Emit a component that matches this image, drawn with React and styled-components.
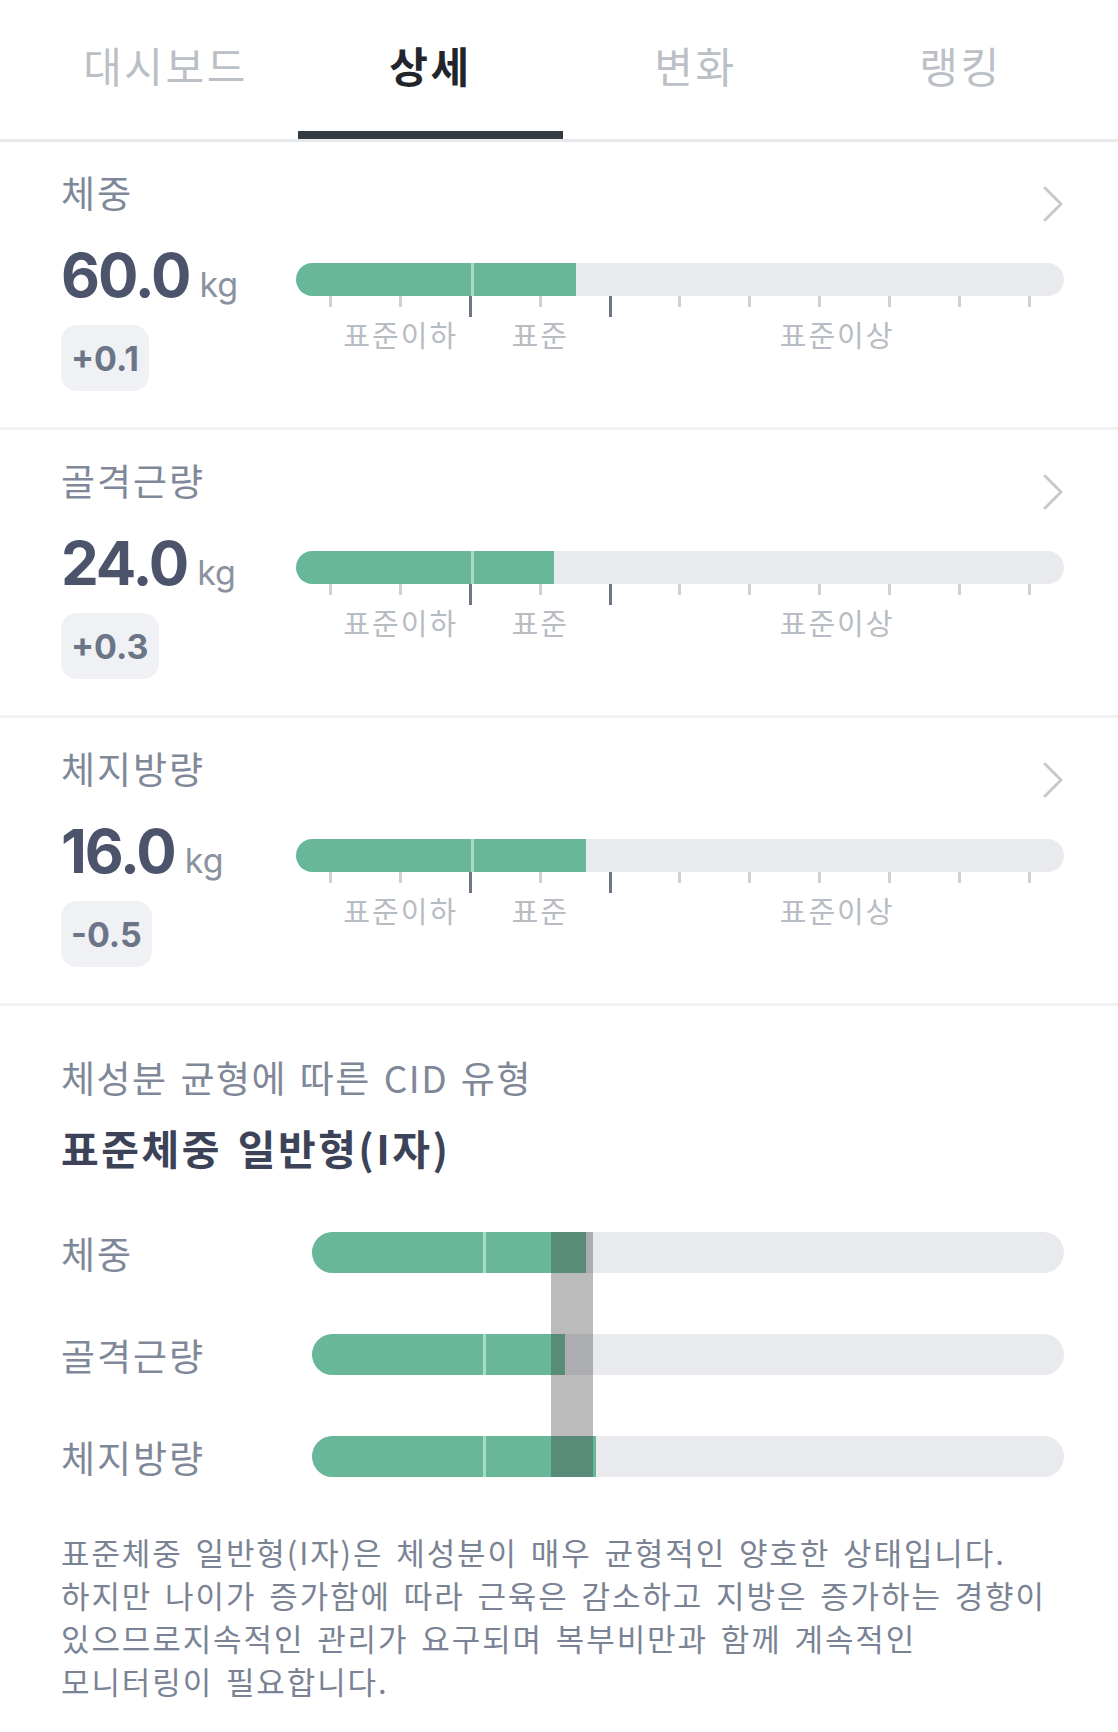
import React from "react";
import styled, { createGlobalStyle } from "styled-components";

const GlobalStyle = createGlobalStyle`
  html, body {
    margin: 0;
    padding: 0;
    background: #ffffff;
  }
  body {
    font-family: "Noto Sans CJK KR", "Noto Sans", sans-serif;
    -webkit-font-smoothing: antialiased;
  }
  * {
    box-sizing: border-box;
  }
`;

const GREEN = "#68b799";
const TRACK = "#e9eaee";
const MARK = (2.5 / 11) * 100;

const Page = styled.div`
  width: 1118px;
  min-height: 1732px;
  background: #ffffff;
`;

const TabBar = styled.nav`
  display: flex;
  height: 142px;
  padding-left: 33px;
  border-bottom: 3px solid #e8e9ec;
`;

const Tab = styled.div`
  width: 265px;
  display: flex;
  align-items: center;
  justify-content: center;
  padding-bottom: 2px;
  font-size: 42px;
  letter-spacing: 2.5px;
  font-weight: ${(p) => (p.$active ? 700 : 400)};
  color: ${(p) => (p.$active ? "#22262c" : "#bbbfc6")};
  border-bottom: 8px solid ${(p) => (p.$active ? "#343c43" : "transparent")};
`;

const Metric = styled.section`
  height: 288px;
  padding: 28px 54px 0 61px;
  border-bottom: 3px solid #f1f2f4;
`;

const MetricHeader = styled.div`
  display: flex;
  justify-content: space-between;
  align-items: flex-start;
  height: 51px;
`;

const Label = styled.div`
  font-size: 37px;
  line-height: 44px;
  letter-spacing: 2px;
  color: #7f8898;
`;

const ChevronIcon = styled.svg`
  margin-top: 15px;
  display: block;
`;

const MetricBody = styled.div`
  display: flex;
  margin-top: 24px;
`;

const LeftCol = styled.div`
  width: 235px;
  flex: none;
  display: flex;
  flex-direction: column;
  align-items: flex-start;
`;

const Value = styled.div`
  display: flex;
  align-items: baseline;
  font-family: Inter, "Noto Sans", sans-serif;
  font-size: 60px;
  font-weight: 700;
  line-height: 60px;
  letter-spacing: -2px;
  color: #4b546a;
`;

const Unit = styled.span`
  margin-left: 10px;
  font-size: 34px;
  font-weight: 400;
  letter-spacing: 0;
  color: #8a92a0;
`;

const Badge = styled.div`
  margin-top: 10px;
  height: 66px;
  padding: 0 10px;
  display: flex;
  align-items: center;
  border-radius: 16px;
  background: #f0f1f5;
  font-family: Inter, "Noto Sans", sans-serif;
  font-size: 34px;
  font-weight: 700;
  color: #6c7588;
`;

const RightCol = styled.div`
  flex: 1;
  padding-top: 18px;
`;

const Track = styled.div`
  display: flex;
  height: ${(p) => p.$h}px;
  border-radius: ${(p) => p.$h / 2}px;
  background: ${TRACK};
  overflow: hidden;
`;

const Fill = styled.div`
  flex: none;
  height: 100%;
  background: ${GREEN};
`;

const FillMark = styled.div`
  flex: none;
  width: 3px;
  height: 100%;
  background: #a8dbc5;
`;

const TickRow = styled.div`
  display: flex;
  height: 21px;
`;

const TickCell = styled.div`
  flex: 1;
  display: flex;
  justify-content: center;
`;

const Tick = styled.div`
  width: 3px;
  height: ${(p) => (p.$major ? 21 : 11)}px;
  background: ${(p) => (p.$major ? "#6e7686" : "#cfd1d5")};
`;

const ScaleLabels = styled.div`
  display: grid;
  grid-template-columns: repeat(22, 1fr);
  margin-top: 0;
`;

const ScaleLabel = styled.div`
  grid-row: 1;
  grid-column: ${(p) => p.$span};
  text-align: center;
  white-space: nowrap;
  font-size: 29px;
  letter-spacing: 2px;
  line-height: 34px;
  color: #b8bcc3;
`;

const CidSection = styled.section`
  padding: 49px 54px 30px 61px;
`;

const CidCaption = styled.div`
  font-size: 37px;
  line-height: 44px;
  letter-spacing: 1.5px;
  word-spacing: 3px;
  color: #7f8898;
`;

const CidTitle = styled.div`
  margin-top: 23px;
  font-size: 41px;
  font-weight: 700;
  line-height: 50px;
  letter-spacing: 2.5px;
  word-spacing: 4px;
  color: #3c4358;
`;

const Chart = styled.div`
  display: grid;
  grid-template-columns: 251px 1fr;
  grid-auto-rows: 41px;
  row-gap: 61px;
  margin-top: 60px;
  align-items: center;
`;

const RowLabel = styled.div`
  grid-column: 1;
  font-size: 37px;
  line-height: 44px;
  letter-spacing: 2px;
  color: #7f8898;
`;

const RowTrack = styled.div`
  grid-column: 2;
`;

const Band = styled.div`
  grid-column: 2;
  grid-row: 1 / 4;
  align-self: stretch;
  position: relative;
  z-index: 1;
  margin-left: 31.8%;
  width: 5.6%;
  background: rgba(60, 60, 64, 0.35);
`;

const Description = styled.p`
  margin: 53px 0 0;
  font-size: 31px;
  line-height: 43px;
  letter-spacing: 1.9px;
  word-spacing: 4px;
  color: #7a8394;
`;

const Chevron = () => (
  <ChevronIcon width="22" height="38" viewBox="0 0 22 38">
    <polyline
      points="3,3 19,19 3,35"
      fill="none"
      stroke="#c9c9cd"
      strokeWidth="3"
      strokeLinecap="round"
      strokeLinejoin="round"
    />
  </ChevronIcon>
);

const Bar = ({ fill, height }) => (
  <Track $h={height}>
    <Fill style={{ width: `${MARK}%` }} />
    <FillMark />
    <Fill style={{ width: `calc(${fill - MARK}% - 3px)` }} />
  </Track>
);

const tabs = ["대시보드", "상세", "변화", "랭킹"];

const metrics = [
  { label: "체중", value: "60.0", delta: "+0.1", fill: 36.5 },
  { label: "골격근량", value: "24.0", delta: "+0.3", fill: 33.6 },
  { label: "체지방량", value: "16.0", delta: "-0.5", fill: 37.7 },
];

const MetricRow = ({ item }) => (
  <Metric>
    <MetricHeader>
      <Label>{item.label}</Label>
      <Chevron />
    </MetricHeader>
    <MetricBody>
      <LeftCol>
        <Value>
          {item.value}
          <Unit>kg</Unit>
        </Value>
        <Badge>{item.delta}</Badge>
      </LeftCol>
      <RightCol>
        <Bar fill={item.fill} height={33} />
        <TickRow>
          {Array.from({ length: 11 }).map((_, i) => (
            <TickCell key={i}>
              <Tick $major={i === 2 || i === 4} />
            </TickCell>
          ))}
        </TickRow>
        <ScaleLabels>
          <ScaleLabel $span="1 / 7">표준이하</ScaleLabel>
          <ScaleLabel $span="6 / 10">표준</ScaleLabel>
          <ScaleLabel $span="10 / 23">표준이상</ScaleLabel>
        </ScaleLabels>
      </RightCol>
    </MetricBody>
  </Metric>
);

const App = () => {
  return (
    <>
      <GlobalStyle />
      <Page>
        <TabBar>
          {tabs.map((t, i) => (
            <Tab key={t} $active={i === 1}>
              {t}
            </Tab>
          ))}
        </TabBar>

        {metrics.map((m) => (
          <MetricRow key={m.label} item={m} />
        ))}

        <CidSection>
          <CidCaption>체성분 균형에 따른 CID 유형</CidCaption>
          <CidTitle>표준체중 일반형(I자)</CidTitle>
          <Chart>
            {metrics.map((m, i) => (
              <React.Fragment key={m.label}>
                <RowLabel style={{ gridRow: i + 1 }}>{m.label}</RowLabel>
                <RowTrack style={{ gridRow: i + 1 }}>
                  <Bar fill={m.fill} height={41} />
                </RowTrack>
              </React.Fragment>
            ))}
            <Band />
          </Chart>
          <Description>
            표준체중 일반형(I자)은 체성분이 매우 균형적인 양호한 상태입니다.
            <br />
            하지만 나이가 증가함에 따라 근육은 감소하고 지방은 증가하는 경향이
            <br />
            있으므로지속적인 관리가 요구되며 복부비만과 함께 계속적인
            <br />
            모니터링이 필요합니다.
          </Description>
        </CidSection>
      </Page>
    </>
  );
};

export default App;
